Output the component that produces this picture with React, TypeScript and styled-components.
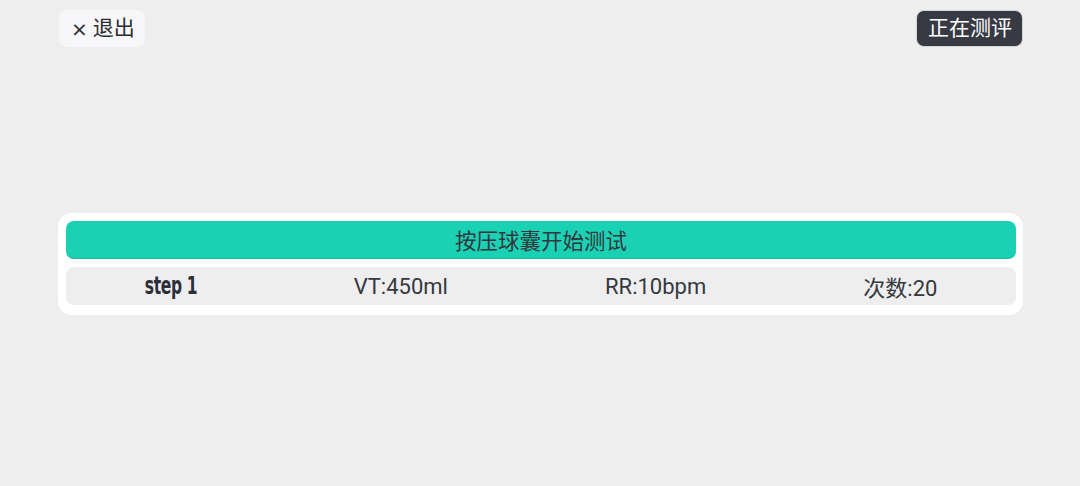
import { createGlobalStyle, styled } from "styled-components";

const GlobalStyle = createGlobalStyle`
  html, body {
    margin: 0;
    padding: 0;
    background: #eeeeee;
    font-family: Roboto, "Noto Sans CJK SC", sans-serif;
  }
`;

const Page = styled.div`
  width: 1080px;
  height: 486px;
  box-sizing: border-box;
  padding: 10px 57px 0 58px;
  display: flex;
  flex-direction: column;
`;

const Header = styled.div`
  display: flex;
  justify-content: space-between;
  align-items: center;
  padding-left: 1px;
`;

const TopButton = styled.button<{ $dark?: boolean }>`
  height: 37px;
  box-sizing: border-box;
  padding: 0 ${(p) => (p.$dark ? "10px 0 11px" : "10px 0 12px")};
  border-radius: 8px;
  border: ${(p) => (p.$dark ? "1px solid #d6d6d8" : "none")};
  background: ${(p) => (p.$dark ? "#373a43" : "#f7f6f8")};
  color: ${(p) => (p.$dark ? "#ffffff" : "#2a2c33")};
  font-family: Roboto, "Noto Sans CJK SC", sans-serif;
  font-size: 21px;
  line-height: 1;
  display: flex;
  align-items: center;
  gap: 5px;
  cursor: pointer;
`;

const Cross = styled.span`
  font-size: 20px;
  font-family: "DejaVu Sans", sans-serif;
`;

const Card = styled.div`
  margin-top: 166px;
  background: #ffffff;
  border-radius: 14px;
  padding: 8px 7px 10px 8px;
  display: flex;
  flex-direction: column;
  gap: 8px;
`;

const StartBar = styled.div`
  height: 38px;
  border-radius: 8px;
  background: #1bd1b3;
  border-bottom: 1px solid #17bfa3;
  box-sizing: border-box;
  display: flex;
  align-items: center;
  justify-content: center;
  color: #33373d;
  font-size: 21.5px;
`;

const InfoRow = styled.div`
  height: 38px;
  border-radius: 8px;
  background: #eeeeee;
  display: flex;
  align-items: center;
  justify-content: space-around;
  color: #35383e;
  font-size: 22px;
`;

const Step = styled.span`
  display: inline-flex;
  justify-content: center;
  width: 52px;
  white-space: nowrap;
  font-family: "DejaVu Sans Condensed", "DejaVu Sans", sans-serif;
  font-stretch: condensed;
  font-weight: 700;
  font-size: 24px;
  color: #2b2f3a;
  letter-spacing: -0.5px;
  transform: scaleX(0.72);
`;

const Cell = styled.span`
  font-family: Roboto, "Noto Sans CJK SC", sans-serif;
`;

export default function App() {
  return (
    <>
      <GlobalStyle />
      <Page>
        <Header>
          <TopButton>
            <Cross>×</Cross>退出
          </TopButton>
          <TopButton $dark>正在测评</TopButton>
        </Header>
        <Card>
          <StartBar>按压球囊开始测试</StartBar>
          <InfoRow>
            <Step>step 1</Step>
            <Cell>VT:450ml</Cell>
            <Cell>RR:10bpm</Cell>
            <Cell>次数:20</Cell>
          </InfoRow>
        </Card>
      </Page>
    </>
  );
}
